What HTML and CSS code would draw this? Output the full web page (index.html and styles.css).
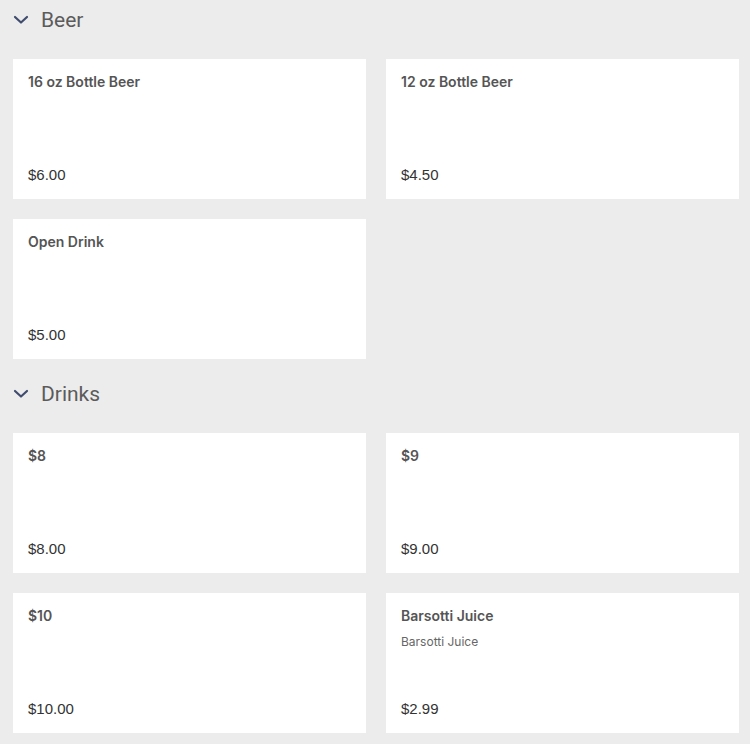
FILE: index.html
```html
<!DOCTYPE html>
<html lang="en">

<head>
    <meta charset="UTF-8">
    <meta name="viewport" content="width=device-width, initial-scale=1.0">
    <title>Menu</title>
    <link rel="stylesheet" href="styles.css">
</head>

<body>
    <section class="category">
        <div class="category-header">
            <svg class="chevron" width="16" height="10" viewBox="0 0 16 10">
                <path d="M2 2 L8 7.5 L14 2" fill="none" stroke="#3f4c6d" stroke-width="2.2" stroke-linecap="round" stroke-linejoin="round"/>
            </svg>
            <h2>Beer</h2>
        </div>
        <div class="item-grid">
            <div class="item-card">
                <div class="item-info">
                    <h3>16 oz Bottle Beer</h3>
                </div>
                <p class="price">$6.00</p>
            </div>
            <div class="item-card">
                <div class="item-info">
                    <h3>12 oz Bottle Beer</h3>
                </div>
                <p class="price">$4.50</p>
            </div>
            <div class="item-card">
                <div class="item-info">
                    <h3>Open Drink</h3>
                </div>
                <p class="price">$5.00</p>
            </div>
        </div>
    </section>

    <section class="category">
        <div class="category-header">
            <svg class="chevron" width="16" height="10" viewBox="0 0 16 10">
                <path d="M2 2 L8 7.5 L14 2" fill="none" stroke="#3f4c6d" stroke-width="2.2" stroke-linecap="round" stroke-linejoin="round"/>
            </svg>
            <h2>Drinks</h2>
        </div>
        <div class="item-grid">
            <div class="item-card">
                <div class="item-info">
                    <h3>$8</h3>
                </div>
                <p class="price">$8.00</p>
            </div>
            <div class="item-card">
                <div class="item-info">
                    <h3>$9</h3>
                </div>
                <p class="price">$9.00</p>
            </div>
            <div class="item-card">
                <div class="item-info">
                    <h3>$10</h3>
                </div>
                <p class="price">$10.00</p>
            </div>
            <div class="item-card">
                <div class="item-info">
                    <h3>Barsotti Juice</h3>
                    <p class="description">Barsotti Juice</p>
                </div>
                <p class="price">$2.99</p>
            </div>
        </div>
    </section>
</body>

</html>
```

FILE: styles.css
```css
body {
    margin: 0;
    padding: 0 11px 0 13px;
    background-color: #ececec;
    font-family: Inter, "Noto Sans", sans-serif;
}

.category + .category {
    margin-top: 15px;
}

.category-header {
    display: flex;
    align-items: center;
    height: 40px;
    margin-bottom: 19px;
}

.chevron {
    margin-right: 12px;
}

.category-header h2 {
    margin: 0;
    font-family: Roboto, sans-serif;
    font-weight: 400;
    font-size: 21px;
    color: #5b5b5b;
}

.item-grid {
    display: grid;
    grid-template-columns: 1fr 1fr;
    gap: 20px;
}

.item-card {
    background: white;
    height: 140px;
    box-sizing: border-box;
    padding: 13px 15px 14px;
    display: flex;
    flex-direction: column;
    justify-content: space-between;
}

.item-info h3 {
    margin: 0;
    font-size: 14px;
    font-weight: 600;
    line-height: 20px;
    color: #555;
}

.description {
    margin: 6px 0 0;
    font-size: 12px;
    line-height: 20px;
    color: #666;
}

.price {
    margin: 0;
    font-family: "Liberation Sans", Arial, sans-serif;
    font-size: 15px;
    line-height: 20px;
    color: #333;
}
```
